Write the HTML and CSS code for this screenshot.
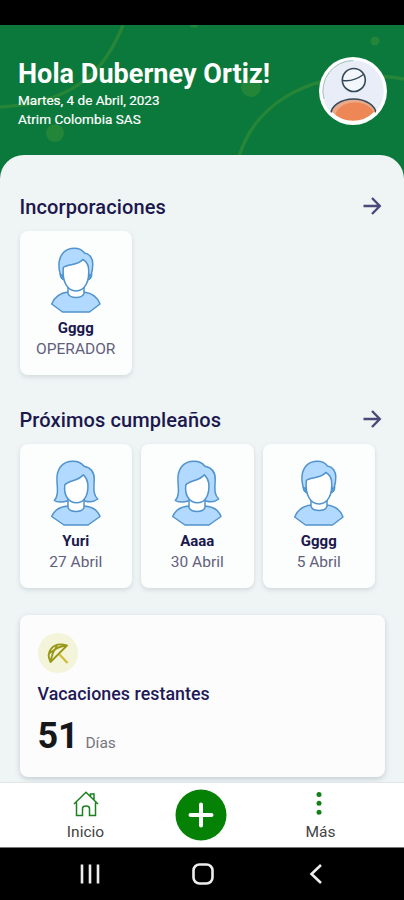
FILE: index.html
```html
<!DOCTYPE html>
<html lang="es">
<head>
<meta charset="utf-8">
<meta name="viewport" content="width=device-width, initial-scale=1">
<title>Inicio</title>
<link rel="stylesheet" href="styles.css">
</head>
<body>
<svg class="sprite" aria-hidden="true">
  <symbol id="man" viewBox="0 0 52 66">
    <path class="tint" d="M18 45C10 46 4.500 50 1.700 57L12.500 65H39.500L50 57C47.500 50 42 46 34 45z"/>
    <path class="skin" d="M18 40v6.500c1 2.500 4.500 4 8 4s7-1.500 8-4v-6.500z"/>
    <path class="ear" d="M14 24.500h-2c-3 0-2.500 8 2 8.500zM38 24.500h2c3 0 2.500 8-2 8.500z"/>
    <path class="tint" d="M10.500 28C8.900 23 8.600 18 9.300 14C10.800 6 16.500 1.200 24 1.200C29 1.200 32.500 3 34.500 6C39.500 6.500 42.800 11 42.800 17C42.800 21 42 25 41 28z"/>
    <path class="skin" d="M13.300 20.500C12 35 17.500 44 26 44S40 35 38.500 20.500C37.800 17 35.500 14 32.800 12.500C28 19 18 16.500 13.300 20.500z"/>
  </symbol>
  <symbol id="woman" viewBox="0 0 52 66">
    <path class="tint" d="M17 41C13 42.500 7 42.500 4.300 40.500C8.500 36 7.500 29 7 22C6 9 12 1.200 23 1.200C28 1.200 32 3.500 34 6.300C42 8 44.500 14 44.200 20C43.800 29 43 35 47.700 39C44 42 39 42.300 35 41z"/>
    <path class="tint" d="M18 46C10 46.500 4.500 50 1.700 56.500L14 65H38L50 56.500C47.500 50 42 46.500 34 46z"/>
    <path class="skin" d="M18 38v9.500c1 2.500 4.500 4 8 4s7-1.500 8-4v-9.500z"/>
    <path class="skin" d="M14.800 25C13.500 36 19 42.800 26.300 42.800S38.800 36 37.800 23.500C37.300 20 35.500 17 33.300 14.800C28.500 21.500 18 20 14.800 25z"/>
  </symbol>
  <symbol id="arrow" viewBox="0 0 20 20"><path d="M1.500 10h16M10 2l7.800 8-7.800 8"/></symbol>
</svg>

<div class="phone">
  <div class="status"></div>
  <header class="hero">
    <svg class="pattern" viewBox="0 0 404 160" aria-hidden="true">
      <path d="M123 0C108 36 84 78 0 82M239 132C256 74 320 40 404 54"/>
      <circle cx="375" cy="16" r="4.500"/><circle cx="251" cy="62" r="10"/><circle cx="55" cy="108" r="9"/><circle cx="194" cy="-2" r="5"/>
    </svg>
    <div class="greeting">
      <h1>Hola Duberney Ortiz!</h1>
      <p class="date">Martes, 4 de Abril, 2023</p>
      <p class="company">Atrim Colombia SAS</p>
    </div>
    <svg class="profile" viewBox="0 0 68 68">
      <clipPath id="disc"><circle cx="34" cy="34" r="31"/></clipPath>
      <circle cx="34" cy="34" r="34" fill="#fff"/>
      <circle cx="34" cy="34" r="30.800" fill="#e9edf7"/>
      <path d="M5 42A30.500 30.500 0 0 1 34 3.500" fill="none" stroke="#91b7ac" stroke-width=".8"/>
      <g clip-path="url(#disc)">
        <ellipse cx="34.500" cy="57" rx="22.500" ry="15" fill="#eba98a" stroke="#34495a" stroke-width="1.600"/>
        <ellipse cx="36" cy="60" rx="20" ry="14.500" fill="#ed8756"/>
      </g>
      <circle cx="34.800" cy="23" r="11.500" fill="#f3f7fb" stroke="#34495a" stroke-width="1.600"/>
      <path d="M24 23.500C31 24.500 39 21.500 44.500 17.500" fill="none" stroke="#34495a" stroke-width="1.500"/>
      <path d="M56 56A31 31 0 0 1 12 56" fill="none" stroke="#fff" stroke-width="3"/>
    </svg>
  </header>

  <main class="sheet">
    <section class="group">
      <div class="heading"><h2>Incorporaciones</h2><svg class="arrow"><use href="#arrow"/></svg></div>
      <div class="people">
        <article class="person"><svg class="avatar"><use href="#man"/></svg><b>Gggg</b><span>OPERADOR</span></article>
      </div>
    </section>
    <section class="group">
      <div class="heading"><h2>Próximos cumpleaños</h2><svg class="arrow"><use href="#arrow"/></svg></div>
      <div class="people">
        <article class="person"><svg class="avatar"><use href="#woman"/></svg><b>Yuri</b><span>27 Abril</span></article>
        <article class="person"><svg class="avatar"><use href="#woman"/></svg><b>Aaaa</b><span>30 Abril</span></article>
        <article class="person"><svg class="avatar"><use href="#man"/></svg><b>Gggg</b><span>5 Abril</span></article>
      </div>
    </section>
    <section class="vacation">
      <svg class="umbrella" viewBox="0 0 40 40">
        <circle cx="20" cy="20" r="20" fill="#f3f4da"/>
        <path d="M21.500 21.500l8 8.500" stroke="#cfbd38" stroke-width="2.200"/>
        <path d="M12.500 29C7.500 20 14 8 29 12.500zM12.500 29C13.500 24 14.500 19 17 16.500C20 14 24.500 13 29 12.500M11 20.500L17 16.500L19.500 11.300" fill="none" stroke="#989817" stroke-width="1.800" stroke-linejoin="round"/>
      </svg>
      <h3>Vacaciones restantes</h3>
      <p class="count"><strong>51</strong><span>Días</span></p>
    </section>
  </main>

  <nav class="tabs">
    <a class="tab home"><svg viewBox="0 0 26 26"><path d="M1 13L13 1.200L25 13M3.500 11.500V24.500H9.500V17.500Q9.500 15 13 15T16.500 17.500V24.500H22.500V11.500M17.500 5.500V3H21V9"/></svg><span>Inicio</span></a>
    <a class="add"><svg viewBox="0 0 52 52"><circle cx="26" cy="26" r="25.500" fill="#058205"/><path d="M26 15.500v21M15.500 26h21"/></svg></a>
    <a class="tab more"><svg viewBox="0 0 26 26"><circle cx="11" cy="3.500" r="2.500"/><circle cx="11" cy="12.300" r="2.500"/><circle cx="11" cy="21.200" r="2.500"/></svg><span>Más</span></a>
  </nav>
  <footer class="system">
    <svg viewBox="0 0 20 22"><path d="M2 1.500v19M10 1.500v19M18 1.500v19"/></svg>
    <svg viewBox="0 0 22 22"><rect x="1.500" y="1.500" width="19" height="19" rx="6"/></svg>
    <svg viewBox="0 0 14 22"><path d="M12 2L2.500 11L12 20"/></svg>
  </footer>
</div>
</body>
</html>
```
FILE: styles.css
```css
* { box-sizing: border-box; }
body, h1, h2, h3, p { margin: 0; }
body { font-family: Roboto, "Liberation Sans", sans-serif; background: #000; }
.sprite { position: absolute; width: 0; height: 0; }
.phone { display: flex; flex-direction: column; width: 404px; height: 900px; overflow: hidden; }
.status { flex: 0 0 25px; background: #000; }

.hero { position: relative; flex: 0 0 160px; display: flex; justify-content: space-between; padding: 32px 17px 0 18px; background: #0b783c; color: #fff; }
.pattern { position: absolute; inset: 0; width: 404px; height: 160px; }
.pattern path { fill: none; stroke: #268537; stroke-width: 3.5; }
.pattern circle { fill: #238538; }
.greeting { position: relative; white-space: nowrap; }
h1 { font-size: 27px; line-height: 34px; font-weight: 700; letter-spacing: 0.04px; }
.date, .company { font-size: 13.5px; line-height: 18.5px; font-weight: 400; -webkit-text-stroke: 0.2px #fff; }
.company { letter-spacing: 0.05px; }
.profile { position: relative; width: 68px; height: 68px; }

.sheet { position: relative; flex: 1; min-height: 0; margin-top: -30px; padding: 36px 19px 0 19.5px; overflow: hidden; background: #eff4f5; border-radius: 24px 24px 0 0; }
.group { height: 213px; }
.heading { display: flex; align-items: center; justify-content: space-between; height: 30px; padding-right: 3px; margin-bottom: 10px; color: #1b184d; }
h2 { padding-top: 1px; font-size: 20px; line-height: 30px; font-weight: 500; letter-spacing: 0.11px; white-space: nowrap; }
.arrow { width: 20px; height: 20px; fill: none; stroke: #4b4977; stroke-width: 2.4; }
.people { display: flex; gap: 9px; }
.person { display: flex; flex-direction: column; align-items: center; width: 112.5px; height: 144px; padding-top: 16px; background: #fcfdfd; border-radius: 8px; box-shadow: 0 2px 4px #becacc99; color: #625f7b; font-size: 15px; line-height: 21px; }
.person b { margin-top: 5px; color: #1b184d; font-weight: 700; }
.person span { font-size: 15.5px; }
.avatar { flex: none; width: 52px; height: 66px; }
.skin, .tint { stroke: #5193cc; stroke-width: 1.5; stroke-linejoin: round; }
.skin { fill: #fff; }
.tint { fill: #b2d9ff; }
.ear { fill: #4e9ddc; stroke: #438dcb; }

.vacation { height: 162px; margin-top: -2px; padding: 18px; background: #fcfcfd; border-radius: 8px; box-shadow: 0 2px 5px #b0bdc3b3; }
.umbrella { display: block; width: 40px; height: 40px; }
h3 { margin-top: 10px; color: #1f1957; font-size: 17.8px; line-height: 22px; font-weight: 500; letter-spacing: 0.05px; }
.count { display: flex; align-items: baseline; gap: 7px; margin-top: 10px; }
.count strong { color: #151719; font-size: 36px; line-height: 42px; font-weight: 700; letter-spacing: -0.2px; }
.count span { color: #74767c; font-size: 15.5px; }

.tabs { position: relative; flex: 0 0 66px; display: grid; grid-template-columns: 171px 60px 173px; background: #fff; border-top: 1px solid #e0e5e7; border-bottom: 1px solid #777; }
.tab { display: flex; flex-direction: column; align-items: center; padding-top: 8px; color: #424242; font-size: 15.5px; line-height: 20px; }
.tab svg { width: 26px; height: 26px; margin-bottom: 5px; }
.home svg { fill: none; stroke: #19821e; stroke-width: 1.5; }
.more svg { fill: #118018; }
.more { padding-left: 6px; }
.add { display: flex; justify-content: center; padding-top: 5.5px; }
.add svg { width: 52px; height: 52px; }
.add path { stroke: #fff; stroke-width: 4; stroke-linecap: round; }

.system { flex: 0 0 52px; display: grid; grid-template-columns: 146px 80px 146px; justify-content: center; justify-items: center; align-items: center; padding-left: 1px; background: #000; }
.system svg { height: 22px; fill: none; stroke: #ededed; stroke-width: 2.6; }
```
